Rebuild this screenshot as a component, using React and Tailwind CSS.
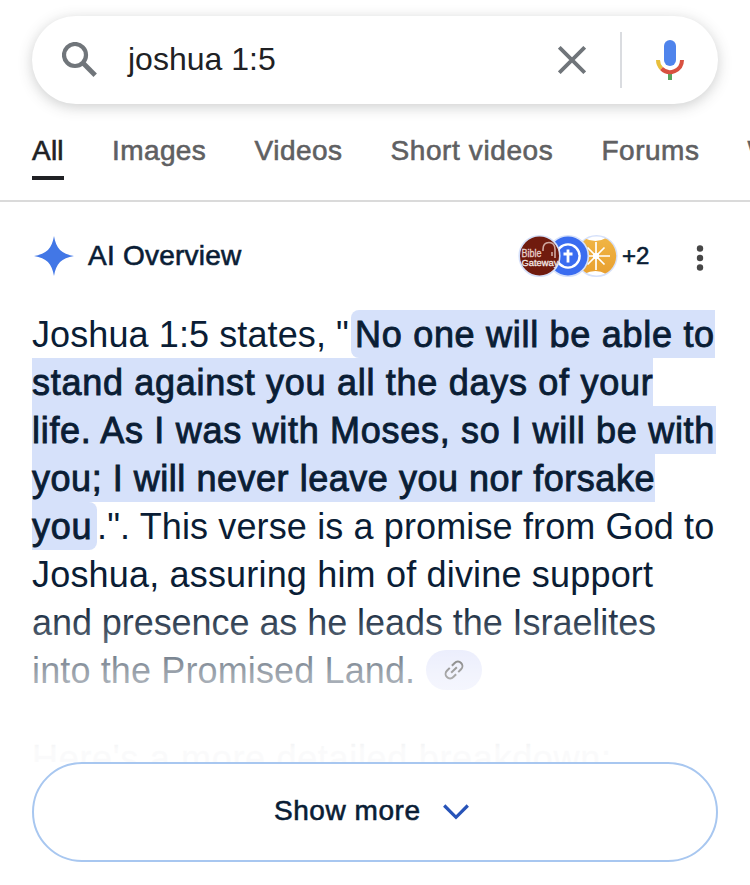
const medium = "[-webkit-text-stroke:0.6px_currentColor]";
const strong = "bg-[#d6e1fa] [-webkit-text-stroke:0.9px_currentColor]";

const tabs = [
  { label: "Images", className: "w-[94.5px] tracking-[0.4px]" },
  { label: "Videos", className: "w-[88px] tracking-[0.5px]" },
  { label: "Short videos", className: "w-[163px] tracking-[0.6px]" },
  { label: "Forums", className: "w-[98px] tracking-[0.5px]" },
  { label: "Web", className: "w-[60px]" },
];

function SearchBar() {
  return (
    <div className="mx-8 flex h-22 items-center rounded-full bg-white shadow-[0_3px_14px_rgba(60,64,67,0.26)]">
      <svg className="ml-[30px] shrink-0" width="36" height="36" viewBox="0 0 36 36" fill="none" stroke="#70757a">
        <circle cx="13" cy="13" r="11" strokeWidth="4.2" />
        <path d="M21.5 21.5 L33.2 33.2" strokeWidth="4.8" />
      </svg>
      <span className="ml-[30px] flex-1 pb-0.5 text-[32px] leading-10 text-[#202124]">joshua 1:5</span>
      <svg className="shrink-0" width="28" height="28" viewBox="0 0 28 28" fill="none" stroke="#70757a" strokeWidth="3.8">
        <path d="M1.3 1.3 L26.7 26.7 M26.7 1.3 L1.3 26.7" />
      </svg>
      <div className="ml-[34px] h-14 w-0.5 bg-[#dadce0]" />
      <svg className="mr-[34px] ml-[34px] shrink-0" width="28" height="40" viewBox="0 0 28 40" fill="none">
        <rect x="8" y="0" width="12" height="26" rx="6" fill="#4f84ec" />
        <path d="M12 33h4v7h-4z" fill="#58a55c" />
        <path d="M2 20 A12 12 0 0 0 5.5 28.5" stroke="#e8bf3c" strokeWidth="4" />
        <path d="M5.5 28.5 A12 12 0 0 0 26 20" stroke="#d85140" strokeWidth="4" />
      </svg>
    </div>
  );
}

function Sources() {
  return (
    <svg className="shrink-0" width="100" height="44" viewBox="0 0 100 44">
      <defs>
        <linearGradient id="sun" x1="0" y1="0" x2="0" y2="1">
          <stop offset="0" stopColor="#f0b545" />
          <stop offset="1" stopColor="#e8a030" />
        </linearGradient>
        <clipPath id="disc"><circle cx="78.5" cy="22" r="19.7" /></clipPath>
        <clipPath id="bg"><circle cx="21.5" cy="22" r="20" /></clipPath>
      </defs>
      <circle cx="78.5" cy="22" r="20.3" fill="#fff" stroke="#d6e1fa" strokeWidth="1.6" />
      <g clipPath="url(#disc)">
        <path d="M56 4 H66 Q78 10 88 4 H101 V40 H88 Q78 34 66 40 H56Z" fill="url(#sun)" />
        <path d="M78 8 V36 M64 22 H92 M69.500 13.500 L86.500 30.500 M86.500 13.500 L69.500 30.500" stroke="#fff" strokeWidth="1.700" />
        <circle cx="78" cy="22" r="3.200" fill="#fff" />
      </g>
      <circle cx="50" cy="22" r="20.3" fill="#3a6cf0" stroke="#d6e1fa" strokeWidth="1.6" />
      <circle cx="50" cy="22" r="11.6" fill="none" stroke="#fff" strokeWidth="2.4" />
      <path d="M50 15.5V28.5M45.5 20H54.5" stroke="#fff" strokeWidth="2.8" />
      <circle cx="21.5" cy="22" r="20.3" fill="#701b0e" stroke="#d6e1fa" strokeWidth="1.6" />
      <path d="M25 17 V15.500 Q25 8.500 31 8.500 Q37 8.500 37 15.500 V24 M34 18 V22" fill="none" stroke="#cfa8a0" strokeWidth="1.6" />
      <g clipPath="url(#bg)" fontFamily="Liberation Sans, Arial, sans-serif" strokeWidth="0.3">
        <text x="3.500" y="23" fontSize="10" textLength="20" lengthAdjust="spacingAndGlyphs" fill="#e8cfca" stroke="#e8cfca">Bible</text>
        <text x="3.500" y="31.500" fontSize="9.500" textLength="37" lengthAdjust="spacingAndGlyphs" fill="#f5e9e6" stroke="#f5e9e6">Gateway</text>
      </g>
    </svg>
  );
}

function Tabs() {
  return (
    <nav className={`mt-[31px] flex h-[67px] gap-12 overflow-hidden border-b-2 border-[#dadada] pl-8 text-[28px] leading-8 whitespace-nowrap text-[#5f6062] ${medium}`}>
      <div className="h-[45px] w-8 shrink-0 border-b-4 border-[#202124] tracking-[0.2px] text-[#202124]">All</div>
      {tabs.map((t) => (
        <div key={t.label} className={`shrink-0 ${t.className}`}>{t.label}</div>
      ))}
    </nav>
  );
}

function Overview() {
  return (
    <div className="relative mt-8 h-[452px] overflow-hidden pl-8 text-[36px] leading-[49px] whitespace-nowrap text-[#0a1d35]">
      <div className="flex h-12">
        <span className="w-[319px] tracking-[0.1px]">Joshua 1:5 states, "</span>
        <span className={`h-12 w-[364px] rounded-l-lg pl-1 tracking-[0.71px] ${strong}`}>No one will be able to</span>
      </div>
      <div className={`h-12 w-[621px] tracking-[0.71px] ${strong}`}>stand against you all the days of your</div>
      <div className={`h-12 w-[684px] tracking-[0.7px] ${strong}`}>life. As I was with Moses, so I will be with</div>
      <div className={`h-12 w-[623px] tracking-[0.53px] ${strong}`}>you; I will never leave you nor forsake</div>
      <div className="flex h-12">
        <span className={`h-12 w-[65px] rounded-r-lg tracking-[0.8px] ${strong}`}>you</span>
        <span className="tracking-[0.13px]">.". This verse is a promise from God to</span>
      </div>
      <div className="h-12 tracking-[0.18px]">Joshua, assuring him of divine support</div>
      <div className="h-12 tracking-[-0.06px]">and presence as he leads the Israelites</div>
      <div className="flex h-12 items-center">
        <span className="h-12 w-[394px] tracking-[0.13px]">into the Promised Land.</span>
        <span className="flex h-10 w-14 items-center justify-center rounded-full bg-[#dfe3fb]">
          <svg width="24" height="24" viewBox="0 0 24 24" fill="none" stroke="#222" strokeWidth="2">
            <g transform="rotate(-45 12 12)">
              <path d="M10.500 7.500 H6.500 a4.500 4.500 0 0 0 0 9 H10.500 M13.500 7.500 H17.500 a4.500 4.500 0 0 1 0 9 H13.500 M8 12 H16" />
            </g>
          </svg>
        </span>
      </div>
      <div className="mt-10 h-12 tracking-[0.68px] [-webkit-text-stroke:0.5px_currentColor]">Here's a more detailed breakdown:</div>
      <div className="absolute inset-x-0 bottom-0 h-[160px] bg-linear-to-b from-white/0 via-white/60 via-45% to-white/98 to-92%" />
    </div>
  );
}

export default function App() {
  return (
    <main className="h-[885px] w-[750px] overflow-hidden bg-white pt-4 font-['Liberation_Sans',Arial,sans-serif]">
      <SearchBar />
      <Tabs />
      <header className="mt-8 flex h-11 items-center pl-[34px] text-[#0a1d35]">
        <svg className="shrink-0" width="40" height="40" viewBox="0 0 40 40">
          <path d="M20 0 C22 12.500 27.500 18 40 20 C27.500 22 22 27.500 20 40 C18 27.500 12.500 22 0 20 C12.500 18 18 12.500 20 0Z" fill="#4277e6" />
        </svg>
        <h1 className={`ml-[14px] w-[430px] text-[28px] leading-8 tracking-[0.24px] ${medium}`}>AI Overview</h1>
        <Sources />
        <span className={`ml-1 w-[74px] text-2xl ${medium}`}>+2</span>
        <svg className="mt-1" width="8" height="26" viewBox="0 0 8 26" fill="#474747">
          <circle cx="4" cy="3.500" r="3.200" /><circle cx="4" cy="13" r="3.200" /><circle cx="4" cy="22.500" r="3.200" />
        </svg>
      </header>
      <Overview />
      <button className="mx-8 flex h-[100px] w-[686px] items-center rounded-full border-2 border-[#a8c7f0] bg-white pl-[240px] text-[#0a1d35]">
        <span className={`w-[169px] pb-0.5 text-left text-[28px] leading-8 tracking-[0.55px] ${medium}`}>Show more</span>
        <svg width="26" height="16" viewBox="0 0 26 16" fill="none" stroke="#2753b8" strokeWidth="3.2">
          <path d="M1.200 1.500 L13 13.300 L24.800 1.500" />
        </svg>
      </button>
    </main>
  );
}
